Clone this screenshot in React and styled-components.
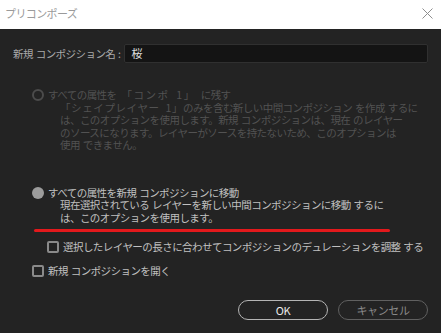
import styled, { createGlobalStyle } from 'styled-components'

const GlobalStyle = createGlobalStyle`
    html, body {
        margin: 0;
        padding: 0;
        background: #232323;
    }
    body {
        font-family: "Noto Sans CJK JP", "Noto Sans", sans-serif;
    }
`

const App = () => {
  return (
    <Dialog>
        <GlobalStyle />
        <TitleBar>
            <Title>プリコンポーズ</Title>
            <Close>
                <svg width="11" height="11" viewBox="0 0 11 11">
                    <path d="M0.5 0.5 L10.5 10.5 M10.5 0.5 L0.5 10.5" stroke="#8e8e8e" strokeWidth="1" />
                </svg>
            </Close>
        </TitleBar>
        <Body>
            <NameRow>
                <Label>新規 コンポジション名 :</Label>
                <Input>桜</Input>
            </NameRow>

            <Option disabled>
                <OptionHead>
                    <Radio disabled />
                    <span>すべての属性を<Quote wide>「コンポ 1」</Quote>に残す</span>
                </OptionHead>
                <Desc>
                    <div><Quote>「シェイプレイヤー 1」</Quote>のみを含む新しい中間コンポジション を作成 するに</div>
                    <div>は、このオプションを使用します。新規 コンポジションは、現在 のレイヤー</div>
                    <div>のソースになります。レイヤーがソースを持たないため、このオプションは</div>
                    <div>使用 できません。</div>
                </Desc>
            </Option>

            <Option second>
                <OptionHead>
                    <Radio checked />
                    <span>すべての属性を新規 コンポジションに移動</span>
                </OptionHead>
                <Desc>
                    <div>現在選択されている レイヤーを新しい中間コンポジションに移動 するに</div>
                    <div>は、このオプションを使用します。</div>
                </Desc>
            </Option>

            <Mark />

            <CheckRow indent>
                <Box />
                <span>選択したレイヤーの長さに合わせてコンポジションのデュレーションを調整 する</span>
            </CheckRow>
            <CheckRow>
                <Box />
                <span>新規 コンポジションを開く</span>
            </CheckRow>

            <Buttons>
                <Button primary>OK</Button>
                <Button>キャンセル</Button>
            </Buttons>
        </Body>
    </Dialog>
  )
}

const Dialog = styled.div`
    width: 441px;
    height: 333px;
    display: flex;
    flex-direction: column;
    background: #232323;
    overflow: hidden;
`

const TitleBar = styled.div`
    height: 29px;
    background: #ffffff;
    display: flex;
    align-items: center;
    justify-content: space-between;
    padding: 0 8px 0 5px;
    box-sizing: border-box;
`

const Title = styled.div`
    font-size: 11px;
    color: #9a9a9a;
    letter-spacing: -0.6px;
    margin-top: -3px;
`

const Close = styled.div`
    display: flex;
    margin-top: -3px;
`

const Body = styled.div`
    flex: 1;
    display: flex;
    flex-direction: column;
    padding: 15px 13px 13px 13px;
    font-size: 10.5px;
    letter-spacing: -0.55px;
    word-spacing: 1px;
`

const Quote = styled.span`
    letter-spacing: ${props => props.wide ? '1.5px' : '0.6px'};
    word-spacing: 3px;
    margin: ${props => props.wide ? '0 5px' : '0'};
`

const NameRow = styled.div`
    display: flex;
    align-items: center;
    gap: 4px;
    height: 19px;
`

const Label = styled.div`
    color: #a9a9a9;
    white-space: nowrap;
`

const Input = styled.div`
    flex: 1;
    height: 19px;
    box-sizing: border-box;
    background: #141414;
    border: 1px solid #303030;
    border-radius: 2px;
    color: #e0e0e0;
    font-size: 11px;
    line-height: 17px;
    padding-left: 6px;
`

const Option = styled.div`
    margin-top: ${props => props.second ? '35px' : '26px'};
    margin-left: 19px;
    color: ${props => props.disabled ? '#525252' : '#c0c0c0'};
    line-height: 12.5px;
`

const OptionHead = styled.div`
    display: flex;
    align-items: center;
    gap: 4px;
    white-space: nowrap;
`

const Radio = styled.div`
    width: 12px;
    height: 12px;
    box-sizing: border-box;
    border-radius: 50%;
    border: ${props => props.checked ? 'none' : '2px solid #4b4b4b'};
    background: ${props => props.checked ? '#9c9c9c' : 'transparent'};
    flex-shrink: 0;
`

const Desc = styled.div`
    padding-left: 28px;
    white-space: nowrap;
`

const Mark = styled.div`
    margin: 5px 0 0 21px;
    width: 356px;
    height: 3px;
    border-radius: 2px;
    background: #e3191c;
`

const CheckRow = styled.div`
    display: flex;
    align-items: center;
    gap: 4px;
    margin-top: ${props => props.indent ? '8px' : '11px'};
    margin-left: ${props => props.indent ? '34px' : '19px'};
    color: #c0c0c0;
    white-space: nowrap;
    height: 13px;
`

const Box = styled.div`
    width: 12px;
    height: 12px;
    box-sizing: border-box;
    border: 2px solid #8a8a8a;
    border-radius: 2px;
    flex-shrink: 0;
`

const Buttons = styled.div`
    margin-top: auto;
    display: flex;
    justify-content: flex-end;
    gap: 10px;
`

const Button = styled.div`
    width: 90px;
    height: 20px;
    box-sizing: border-box;
    border-radius: 10px;
    border: 1.5px solid ${props => props.primary ? '#b4b4b4' : '#606060'};
    color: ${props => props.primary ? '#eaeaea' : '#8a8a8a'};
    display: flex;
    align-items: center;
    justify-content: center;
    font-size: 11px;
    letter-spacing: -0.4px;
`

export default App
